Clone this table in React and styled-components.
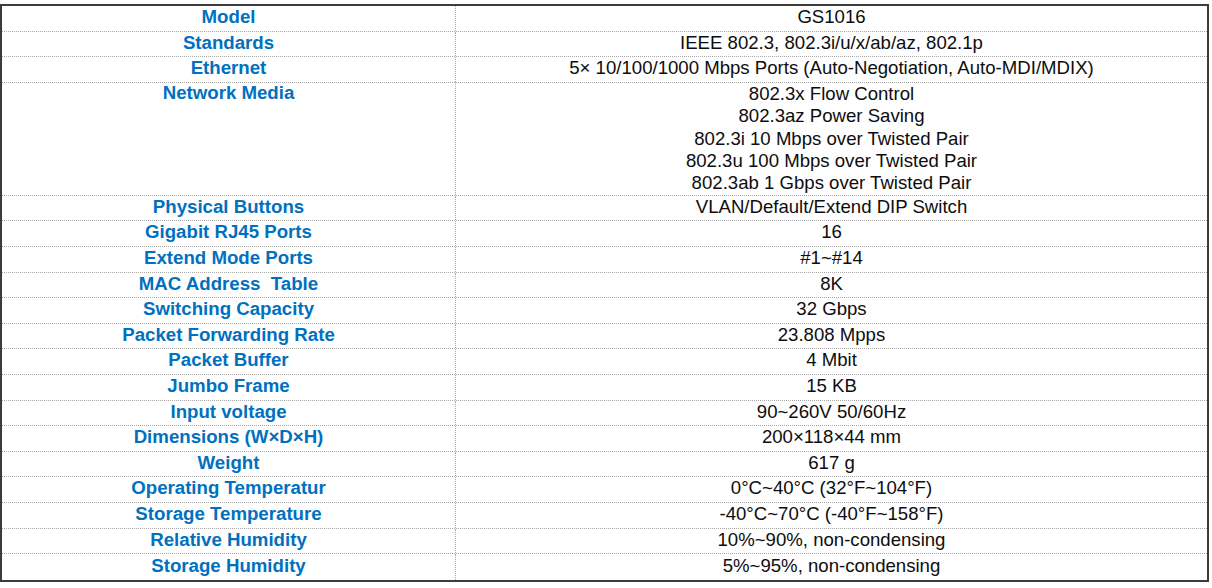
import React from "react";
import styled, { createGlobalStyle } from "styled-components";

const Global = createGlobalStyle`
  html, body { margin: 0; padding: 0; background: #fff; }
  body { font-family: "Liberation Sans", Arial, sans-serif; }
`;

const Page = styled.div`
  padding-top: 4px;
`;

const Table = styled.div`
  width: 1209px;
  box-sizing: border-box;
  border: 2px solid #3c3c3c;
  display: flex;
  flex-direction: column;
  background: #fff;
`;

const Row = styled.div`
  display: grid;
  grid-template-columns: 454px 1fr;
  height: ${(p) => p.$h}px;
  box-sizing: border-box;
  border-bottom: ${(p) => (p.$last ? "none" : "1px dotted #a8a8a8")};
`;

const Label = styled.div`
  border-right: 1px dotted #a8a8a8;
  display: flex;
  justify-content: center;
  align-items: ${(p) => (p.$top ? "flex-start" : "center")};
  padding-bottom: ${(p) => (p.$top ? "0" : "2px")};
  margin-top: ${(p) => (p.$top ? "-1px" : "0")};
  color: #0070c0;
  font-weight: 700;
  font-size: 18.67px;
  line-height: 22.4px;
  white-space: pre;
`;

const Value = styled.div`
  display: flex;
  flex-direction: column;
  justify-content: center;
  align-items: center;
  padding-bottom: 2px;
  color: #0d0d0d;
  font-size: 18.6px;
  line-height: 22.4px;
  white-space: pre;
`;

const rows = [
  ["Model", ["GS1016"]],
  ["Standards", ["IEEE 802.3, 802.3i/u/x/ab/az, 802.1p"]],
  ["Ethernet", ["5× 10/100/1000 Mbps Ports (Auto-Negotiation, Auto-MDI/MDIX)"]],
  [
    "Network Media",
    [
      "802.3x Flow Control",
      "802.3az Power Saving",
      "802.3i 10 Mbps over Twisted Pair",
      "802.3u 100 Mbps over Twisted Pair",
      "802.3ab 1 Gbps over Twisted Pair",
    ],
  ],
  ["Physical Buttons", ["VLAN/Default/Extend DIP Switch"]],
  ["Gigabit RJ45 Ports", ["16"]],
  ["Extend Mode Ports", ["#1~#14"]],
  ["MAC Address  Table", ["8K"]],
  ["Switching Capacity", ["32 Gbps"]],
  ["Packet Forwarding Rate", ["23.808 Mpps"]],
  ["Packet Buffer", ["4 Mbit"]],
  ["Jumbo Frame", ["15 KB"]],
  ["Input voltage", ["90~260V 50/60Hz"]],
  ["Dimensions (W×D×H)", ["200×118×44 mm"]],
  ["Weight", ["617 g"]],
  ["Operating Temperatur", ["0°C~40°C (32°F~104°F)"]],
  ["Storage Temperature", ["-40°C~70°C (-40°F~158°F)"]],
  ["Relative Humidity", ["10%~90%, non-condensing"]],
  ["Storage Humidity", ["5%~95%, non-condensing"]],
];

export default function App() {
  return (
    <Page>
      <Global />
      <Table>
        {rows.map(([label, values], i) => {
          const multi = values.length > 1;
          return (
            <Row key={label} $h={multi ? 113 : 25.6} $last={i === rows.length - 1}>
              <Label $top={multi}>{label}</Label>
              <Value>
                {values.map((v) => (
                  <span key={v}>{v}</span>
                ))}
              </Value>
            </Row>
          );
        })}
      </Table>
    </Page>
  );
}
